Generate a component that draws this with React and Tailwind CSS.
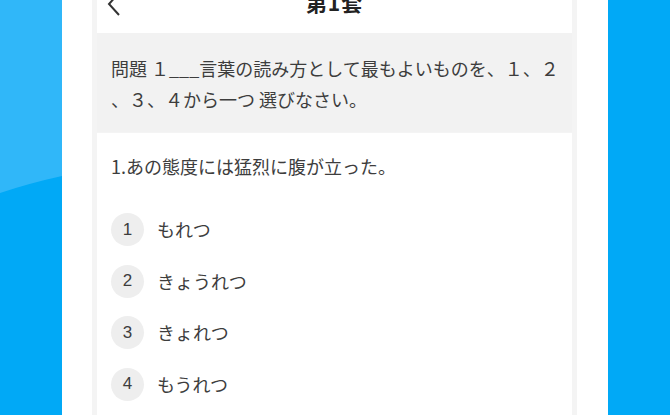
export default function App() {
  const font = { fontFamily: '"Noto Sans CJK JP", "Noto Sans", sans-serif' };
  const options = [
    ["1", "もれつ"],
    ["2", "きょうれつ"],
    ["3", "きょれつ"],
    ["4", "もうれつ"],
  ];
  return (
    <div className="w-[670px] h-[415px] flex overflow-hidden bg-[#01a9f6]" style={font}>
      <div className="w-[62px] h-full relative bg-[#01a9f6]">
        <svg className="absolute left-0 top-0" width="62" height="415" viewBox="0 0 62 415">
          <path d="M0 0 H62 V176 Q30 183 0 193 Z" fill="#30b7f9" />
        </svg>
      </div>
      <div className="w-[546px] h-full bg-white pl-[30px] pr-[31px]">
        <div className="h-full bg-[#f4f4f4] px-[5px] flex flex-col">
          <div className="h-[33px] bg-white relative flex items-start justify-center overflow-hidden">
            <svg className="absolute left-[8px] top-0" width="20" height="20" viewBox="0 0 20 20">
              <path d="M13 -6 L4 4 L14 15" fill="none" stroke="#333" strokeWidth="2" />
            </svg>
            <div className="text-[21px] font-bold text-[#222] leading-none -mt-[8px] tracking-[1px]">第1套</div>
          </div>
          <div className="bg-[#f2f2f2] h-[99px] px-[14px] pt-[20px] text-[18px] leading-[31px] text-[#3d3d3d] whitespace-nowrap">
            <div>問題 １___言葉の読み方として最もよいものを、１、２</div>
            <div>、３、４から一つ 選びなさい。</div>
          </div>
          <div className="flex-1 bg-white mt-[1px] px-[14px] pt-[20px]">
            <div className="text-[18px] leading-[26px] text-[#3d3d3d]">1.あの態度には猛烈に腹が立った。</div>
            <div className="mt-[34px] flex flex-col gap-[18.5px]">
              {options.map(([n, t]) => (
                <div key={n} className="flex items-center">
                  <div className="w-[33px] h-[33px] rounded-full bg-[#eeeeee] flex items-center justify-center text-[17px] text-[#3d3d3d]" style={{ fontFamily: '"Liberation Sans", "Noto Sans", sans-serif' }}>
                    {n}
                  </div>
                  <div className="ml-[13px] text-[18px] text-[#3d3d3d]">{t}</div>
                </div>
              ))}
            </div>
          </div>
        </div>
      </div>
      <div className="flex-1 h-full bg-[#01a9f6]" />
    </div>
  );
}
